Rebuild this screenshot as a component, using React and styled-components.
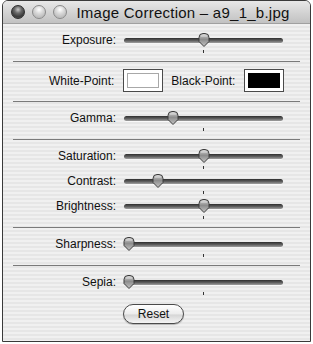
import React from "react";
import styled, { createGlobalStyle } from "styled-components";

const GlobalStyle = createGlobalStyle`
  html, body {
    margin: 0;
    padding: 0;
    background: #ffffff;
  }
  body {
    font-family: "Liberation Sans", Arial, sans-serif;
    color: #111;
  }
`;

const sliders = [
  [{ label: "Exposure:", value: 0.5 }],
  "points",
  [{ label: "Gamma:", value: 0.295 }],
  [
    { label: "Saturation:", value: 0.5 },
    { label: "Contrast:", value: 0.195 },
    { label: "Brightness:", value: 0.5 },
  ],
  [{ label: "Sharpness:", value: 0 }],
  [{ label: "Sepia:", value: 0 }],
];

const Thumb = () => (
  <svg width="12" height="15" viewBox="0 0 12 15">
    <defs>
      <linearGradient id="thumbFill" x1="0" y1="0" x2="0" y2="1">
        <stop offset="0" stopColor="#d8d8d8" />
        <stop offset="0.45" stopColor="#8c8c8c" />
        <stop offset="1" stopColor="#c4c4c4" />
      </linearGradient>
    </defs>
    <path
      d="M1 4.5 Q1 0.5 5 0.5 H7 Q11 0.5 11 4.5 V8.5 L6 13.5 L1 8.5 Z"
      fill="url(#thumbFill)"
      stroke="#3c3c3c"
      strokeWidth="1"
    />
    <path d="M3 3 H9" stroke="#eeeeee" strokeWidth="1" opacity="0.7" />
  </svg>
);

const Slider = ({ value }) => (
  <SliderBox>
    <Track />
    <ThumbWrap style={{ left: 5 + value * 149 - 6 }}>
      <Thumb />
    </ThumbWrap>
    <Tick />
  </SliderBox>
);

const App = () => {
  return (
    <>
      <GlobalStyle />
      <Window>
        <TitleBar>
          <Lights>
            <Light dark />
            <Light />
            <Light />
          </Lights>
          <Title>Image Correction – a9_1_b.jpg</Title>
        </TitleBar>
        <Content>
          {sliders.map((group, i) => (
            <React.Fragment key={i}>
              {i > 0 && <Separator />}
              {group === "points" ? (
                <PointsRow>
                  <PointLabel>White-Point:</PointLabel>
                  <Swatch>
                    <SwatchInner color="#ffffff" />
                  </Swatch>
                  <PointLabel>Black-Point:</PointLabel>
                  <Swatch>
                    <SwatchInner color="#000000" />
                  </Swatch>
                </PointsRow>
              ) : (
                group.map((s) => (
                  <Row key={s.label}>
                    <Label>{s.label}</Label>
                    <Slider value={s.value} />
                  </Row>
                ))
              )}
            </React.Fragment>
          ))}
          <ButtonRow>
            <ResetButton>Reset</ResetButton>
          </ButtonRow>
        </Content>
      </Window>
    </>
  );
};

export default App;

const Window = styled.div`
  margin-left: 2px;
  width: 309px;
  height: 342px;
  box-sizing: border-box;
  border: 1px solid #3a3a3a;
  border-radius: 6px 6px 0 0;
  overflow: hidden;
  display: flex;
  flex-direction: column;
`;

const TitleBar = styled.div`
  height: 22px;
  flex-shrink: 0;
  display: flex;
  align-items: center;
  padding-left: 8px;
  background: linear-gradient(to bottom, #e8e8e8, #d0d0d0 60%, #c2c2c2);
  border-bottom: 1px solid #a0a0a0;
`;

const Lights = styled.div`
  display: flex;
  gap: 7px;
`;

const Light = styled.div`
  width: 14px;
  height: 14px;
  box-sizing: border-box;
  border-radius: 50%;
  border: 1px solid ${({ dark }) => (dark ? "#2e2e2e" : "#8a8a8a")};
  background: ${({ dark }) =>
    dark
      ? "radial-gradient(circle at 50% 30%, #c8c8c8 0, #6a6a6a 35%, #3a3a3a 70%, #7a7a7a 100%)"
      : "radial-gradient(circle at 50% 30%, #ffffff 0, #d8d8d8 40%, #bdbdbd 75%, #e6e6e6 100%)"};
`;

const Title = styled.div`
  flex: 1;
  text-align: center;
  font-size: 15px;
  letter-spacing: 0.25px;
  color: #111;
  padding-right: 15px;
  padding-left: 4px;
  white-space: nowrap;
`;

const Content = styled.div`
  flex: 1;
  padding: 7px 10px 0 10px;
  background: repeating-linear-gradient(
    to bottom,
    #f0f0f0 0,
    #f0f0f0 2px,
    #e6e6e6 2px,
    #e6e6e6 4px
  );
  display: flex;
  flex-direction: column;
`;

const Row = styled.div`
  display: grid;
  grid-template-columns: 103px 159px;
  column-gap: 8px;
  height: 25px;
`;

const Label = styled.div`
  text-align: right;
  font-size: 12px;
  line-height: 18px;
`;

const SliderBox = styled.div`
  position: relative;
  height: 25px;
`;

const Track = styled.div`
  margin-top: 7px;
  height: 5px;
  border-radius: 3px;
  background: linear-gradient(to bottom, #2e2e2e, #5e5e5e 50%, #a0a0a0);
  box-shadow: 0 1px 0 rgba(255, 255, 255, 0.6);
`;

const ThumbWrap = styled.div`
  position: absolute;
  top: 2px;
  width: 12px;
  height: 15px;
  line-height: 0;
`;

const Tick = styled.div`
  position: absolute;
  left: 79px;
  top: 19px;
  width: 1px;
  height: 3px;
  background: #333;
`;

const Separator = styled.div`
  height: 1px;
  margin: 5px 0 7px;
  background: #7a7a7a;
`;

const PointsRow = styled.div`
  display: flex;
  align-items: center;
  padding-left: 36px;
  height: 23px;
  margin-bottom: 4px;
`;

const PointLabel = styled.div`
  font-size: 12px;
  margin-right: 9px;

  & + div + & {
    margin-left: 8px;
  }
`;

const Swatch = styled.div`
  width: 40px;
  height: 23px;
  box-sizing: border-box;
  border: 1px solid #4a4a4a;
  background: #ffffff;
  padding: 3px;
`;

const SwatchInner = styled.div`
  height: 100%;
  box-sizing: border-box;
  background: ${({ color }) => color};
  border: 1px solid ${({ color }) => (color === "#ffffff" ? "#a8a8a8" : "#000")};
`;

const ButtonRow = styled.div`
  margin-top: 6px;
  padding-left: 110px;
`;

const ResetButton = styled.button`
  width: 61px;
  height: 20px;
  padding: 0;
  border: 1px solid #4a4a4a;
  border-radius: 10px;
  background: linear-gradient(to bottom, #ffffff, #ececec 50%, #d6d6d6 55%, #f4f4f4);
  font-family: "Liberation Sans", Arial, sans-serif;
  font-size: 12px;
  color: #111;
  box-shadow: 0 1px 1px rgba(0, 0, 0, 0.25);
`;
